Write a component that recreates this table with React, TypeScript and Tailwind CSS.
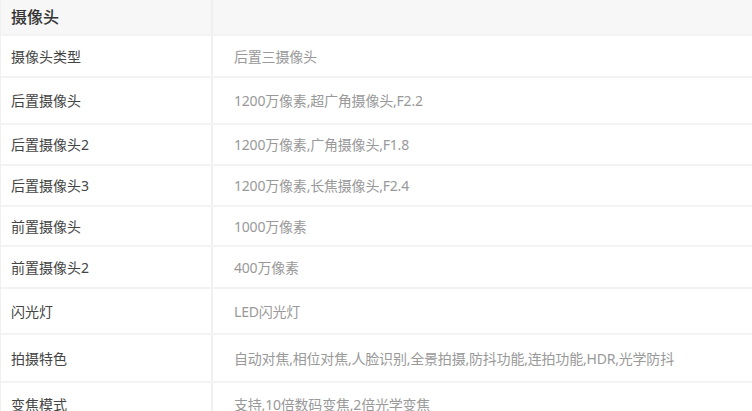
const rows: { label: string; value: string; h: string }[] = [
  { label: "摄像头类型", value: "后置三摄像头", h: "h-[42px]" },
  { label: "后置摄像头", value: "1200万像素,超广角摄像头,F2.2", h: "h-[47px]" },
  { label: "后置摄像头2", value: "1200万像素,广角摄像头,F1.8", h: "h-[41px]" },
  { label: "后置摄像头3", value: "1200万像素,长焦摄像头,F2.4", h: "h-[41px]" },
  { label: "前置摄像头", value: "1000万像素", h: "h-[40px]" },
  { label: "前置摄像头2", value: "400万像素", h: "h-[42px]" },
  { label: "闪光灯", value: "LED闪光灯", h: "h-[46px]" },
  { label: "拍摄特色", value: "自动对焦,相位对焦,人脸识别,全景拍摄,防抖功能,连拍功能,HDR,光学防抖", h: "h-[48px]" },
  { label: "变焦模式", value: "支持,10倍数码变焦,2倍光学变焦", h: "h-[44px]" },
];

export default function App() {
  return (
    <div
      className="h-[411px] w-[752px] overflow-hidden border-l border-[#f0f0f0] bg-white"
      style={{ fontFamily: '"Noto Sans", "Noto Sans CJK SC", sans-serif' }}
    >
      <div className="flex h-[34px] bg-[#f7f7f7]">
        <div className="flex w-[212px] items-center border-r-2 border-[#f0f0f0] pl-[10px] text-[16px] font-medium text-[#333]">
          摄像头
        </div>
        <div className="flex-1" />
      </div>
      {rows.map((r) => (
        <div key={r.label} className={`flex ${r.h} shrink-0 border-t-2 border-[#f3f3f3]`}>
          <div className="flex w-[212px] items-center border-r-2 border-[#f0f0f0] pl-[10px] text-[14px] text-[#444]">
            {r.label}
          </div>
          <div className="flex flex-1 items-center pl-[21px] text-[14px] tracking-[-0.2px] text-[#999]">
            {r.value}
          </div>
        </div>
      ))}
    </div>
  );
}
